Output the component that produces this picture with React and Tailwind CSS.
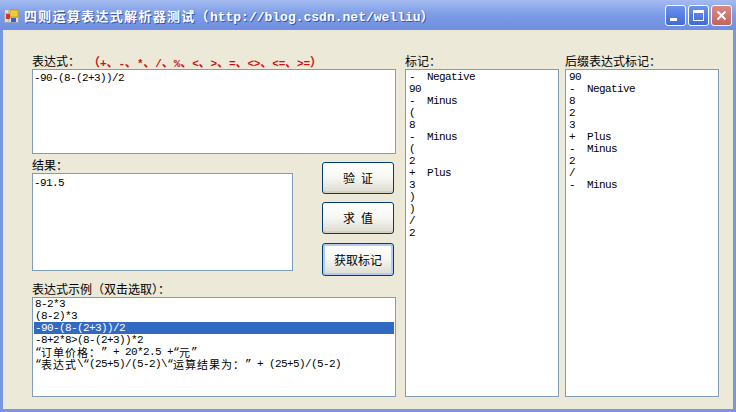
import React from 'react';

const CJK_RE = /([\u3000-\u303f\u3400-\u9fff\uff00-\uffef]+)/;

const mono = "font-['Liberation_Mono','Noto_Sans_CJK_SC',monospace] text-[11px] tracking-[-0.6px]";
const cjk = "font-['Noto_Sans_CJK_SC','Noto_Sans',sans-serif] text-[12px] tracking-normal";
const cjkRow = "font-['Noto_Sans_CJK_SC','Noto_Sans',sans-serif] text-[11px] leading-[12px] tracking-[1px]";
const monoRow = "font-['Liberation_Mono','Noto_Sans_CJK_SC',monospace] text-[11px] leading-[12px] tracking-[-0.6px]";

// splits a string into CJK and ASCII runs, each with its own font
const Mixed = ({ text, cjkClass = cjk, ascClass = mono }) => (
  <>
    {text.split(CJK_RE).map((s, i) =>
      s === '' ? null : (
        <span key={i} className={i % 2 === 1 ? cjkClass : ascClass}>
          {s}
        </span>
      )
    )}
  </>
);

const tokens = [
  ['-', 'Negative'],
  ['90'],
  ['-', 'Minus'],
  ['('],
  ['8'],
  ['-', 'Minus'],
  ['('],
  ['2'],
  ['+', 'Plus'],
  ['3'],
  [')'],
  [')'],
  ['/'],
  ['2'],
];

const postfix = [
  ['90'],
  ['-', 'Negative'],
  ['8'],
  ['2'],
  ['3'],
  ['+', 'Plus'],
  ['-', 'Minus'],
  ['2'],
  ['/'],
  ['-', 'Minus'],
];

const examples = [
  '8-2*3',
  '(8-2)*3',
  '-90-(8-(2+3))/2',
  '-8+2*8>(8-(2+3))*2',
  '“订单价格：” + 20*2.5 +“元”',
  '“表达式\\“(25+5)/(5-2)\\“运算结果为：” + (25+5)/(5-2)',
];

const TokenList = ({ items }) => (
  <div className="h-[328px] border border-[#7f9db9] bg-white pt-[1px]">
    {items.map((t, i) => (
      <div key={i} className={`flex h-[12px] items-center pl-[3px] whitespace-pre text-black ${monoRow}`}>
        <span className="w-[18px]">{t[0]}</span>
        {t[1] && <span>{t[1]}</span>}
      </div>
    ))}
  </div>
);

const XpButton = ({ label, focused }) => (
  <button
    type="button"
    className={`flex w-[72px] items-center justify-center rounded-[3px] border border-[#003c74] bg-gradient-to-b from-[#ffffff] via-[#f6f6f2] to-[#dcdad0] whitespace-pre text-black ${
      focused ? 'h-[33px] shadow-[inset_0_0_0_2px_#b3cbf3]' : 'h-[32px] shadow-[inset_0_-2px_0_#d6d2c2]'
    }`}
  >
    <Mixed text={label} />
  </button>
);

const TitleButton = ({ kind }) => (
  <div
    className={`flex h-[21px] w-[21px] items-center justify-center rounded-[3px] border border-white ${
      kind === 'close' ? 'bg-gradient-to-b from-[#d98a86] to-[#c4625c]' : 'bg-gradient-to-b from-[#6d92ec] to-[#3f6ad9]'
    }`}
  >
    {kind === 'min' && <div className="mt-[9px] mr-[5px] h-[3px] w-[7px] bg-white" />}
    {kind === 'max' && <div className="h-[11px] w-[11px] border border-t-[3px] border-white" />}
    {kind === 'close' && (
      <svg width="11" height="11" viewBox="0 0 11 11">
        <path d="M1.5 1.5 L9.5 9.5 M9.5 1.5 L1.5 9.5" stroke="#fff" strokeWidth="2" />
      </svg>
    )}
  </div>
);

export default function App() {
  return (
    <div className="flex h-[412px] w-[736px] flex-col overflow-hidden bg-[#7b96e0]">
      {/* title bar */}
      <div className="flex h-[30px] items-center bg-gradient-to-b from-[#a4bbf0] via-[#7b9be6] to-[#6f8fdf] pr-[4px] pl-[4px]">
        <svg width="15" height="14" viewBox="0 0 15 14" className="mt-[1px]">
          <rect x="0.5" y="0.5" width="14" height="13" fill="#d9dde8" stroke="#9aa3b8" />
          <path d="M0.5 4.5 H14.5 M0.5 8.5 H14.5 M4.5 0.5 V13.5" stroke="#b3b9c8" />
          <rect x="6" y="1" width="8" height="7" fill="#f3c83a" stroke="#b58d18" strokeWidth="0.6" />
          <rect x="2" y="5" width="4" height="5" fill="#d2382e" />
          <rect x="7" y="9" width="5" height="4" fill="#3c62c8" />
        </svg>
        <div className="ml-[5px] font-bold whitespace-pre text-white [text-shadow:1px_1px_#3557b0]">
          <Mixed
            text="四则运算表达式解析器测试（http://blog.csdn.net/welliu）"
            cjkClass="font-['Noto_Sans_CJK_SC',sans-serif] text-[13px] tracking-[1.3px] font-bold"
            ascClass="font-['Liberation_Mono',monospace] text-[13px] font-bold"
          />
        </div>
        <div className="ml-auto flex gap-[2px]">
          <TitleButton kind="min" />
          <TitleButton kind="max" />
          <TitleButton kind="close" />
        </div>
      </div>

      {/* client area */}
      <div className="mx-[3px] mb-[3px] flex flex-1 bg-[#ece9d8] pt-[22px] pl-[29px]">
        {/* left column */}
        <div className="flex w-[364px] flex-col">
          <div className="flex h-[17px] items-center">
            <span className={`${cjk} text-black`}>表达式：</span>
            <span className="ml-[8px] whitespace-pre font-bold text-[#cc1010]">
              <Mixed
                text="（+、-、*、/、%、<、>、=、<>、<=、>=）"
                cjkClass="font-['Noto_Sans_CJK_SC',sans-serif] text-[12px] font-bold tracking-normal"
                ascClass="font-['Liberation_Mono',monospace] text-[11px] font-bold tracking-[-0.2px]"
              />
            </span>
          </div>
          <div className="h-[85px] border border-[#7f9db9] bg-white pt-[2px] pl-[1px]">
            <div className={`leading-[12px] text-black ${mono}`}>-90-(8-(2+3))/2</div>
          </div>

          <div className="flex">
            <div className="flex w-[261px] flex-col">
              <div className={`mt-[2px] leading-[17px] text-black ${cjk}`}>结果：</div>
              <div className="h-[98px] border border-[#7f9db9] bg-white pt-[3px] pl-[1px]">
                <div className={`leading-[12px] text-black ${mono}`}>-91.5</div>
              </div>
            </div>
            <div className="ml-[29px] flex flex-col pt-[8px]">
              <XpButton label="验 证" />
              <div className="h-[8px]" />
              <XpButton label="求 值" />
              <div className="h-[9px]" />
              <XpButton label="获取标记" focused />
            </div>
          </div>

          <div className={`mt-[4px] leading-[17px] text-black ${cjk}`}>表达式示例（双击选取）：</div>
          <div className="h-[100px] border border-[#7f9db9] bg-white px-[1px]">
            {examples.map((e, i) => (
              <div
                key={i}
                className={`flex h-[12px] items-center pl-[1px] leading-[12px] whitespace-pre ${
                  i === 2 ? 'bg-[#316ac5] text-white' : 'text-black'
                }`}
              >
                <Mixed text={e} cjkClass={cjkRow} ascClass={monoRow} />
              </div>
            ))}
          </div>
        </div>

        {/* token column */}
        <div className="ml-[9px] flex w-[154px] flex-col">
          <div className={`leading-[17px] text-black ${cjk}`}>标记：</div>
          <TokenList items={tokens} />
        </div>

        {/* postfix column */}
        <div className="ml-[6px] flex w-[154px] flex-col">
          <div className={`leading-[17px] text-black ${cjk}`}>后缀表达式标记：</div>
          <TokenList items={postfix} />
        </div>
      </div>
    </div>
  );
}
